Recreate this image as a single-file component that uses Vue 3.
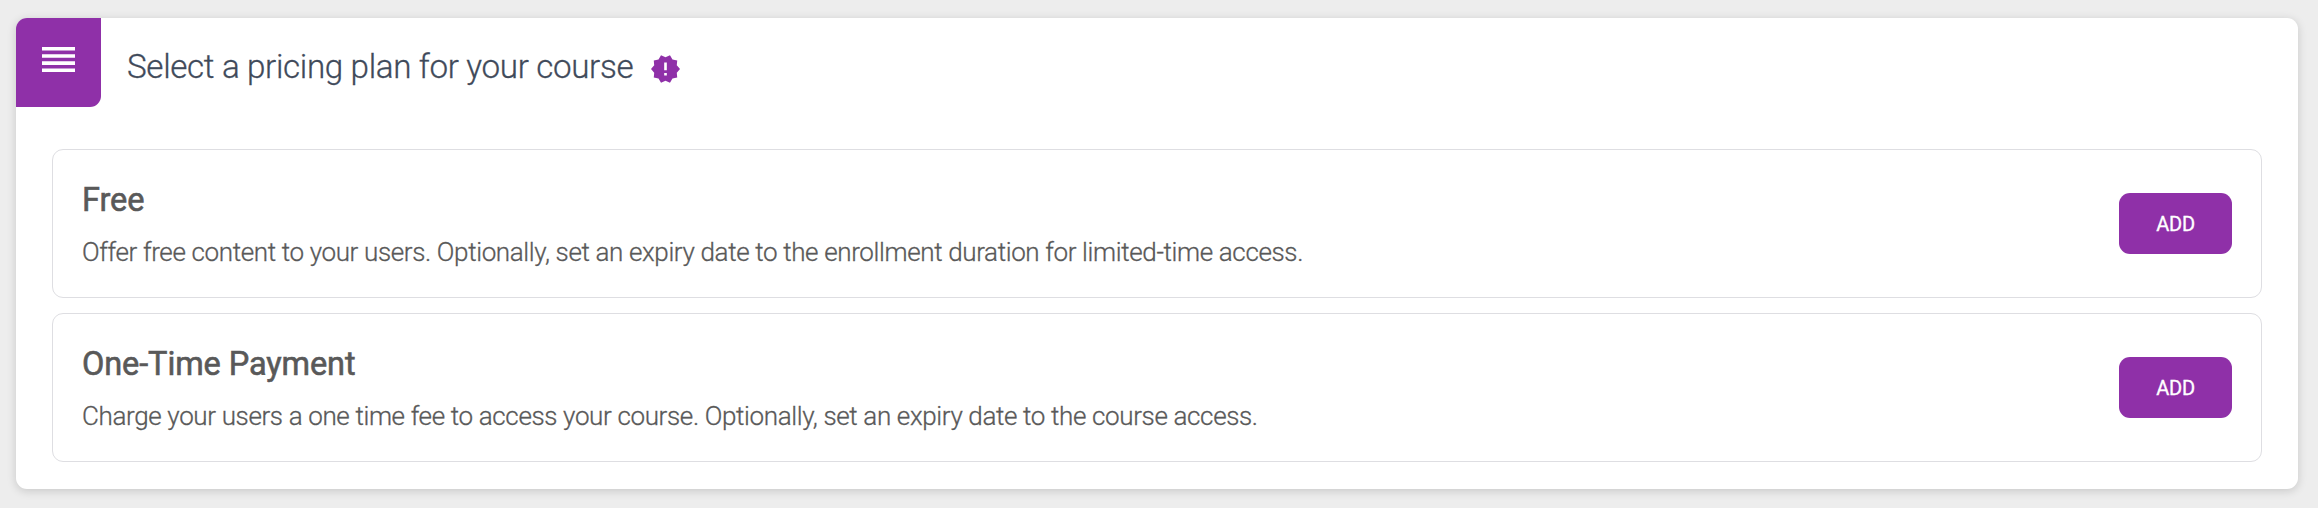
<!--
App.vue — course pricing plan picker
-->
<template>
  <div class="page">
    <section class="card">
      <header class="card-head">
        <div class="card-tab">
          <svg class="tab-icon" viewBox="0 0 33 25">
            <path d="M0 0h33v3.6H0zM0 7.15h33v3.6H0zM0 14.3h33v3.6H0zM0 21.45h33v3.6H0z" />
          </svg>
        </div>
        <h2 class="card-title">Select a pricing plan for your course</h2>
        <svg class="info-icon" viewBox="1 1.5 22 21">
          <path d="M23 12l-2.44-2.78.34-3.68-3.61-.82-1.89-3.18L12 3 8.6 1.54 6.71 4.72l-3.61.81.34 3.68L1 12l2.44 2.78-.34 3.69 3.61.82 1.89 3.18L12 21l3.4 1.46 1.89-3.18 3.61-.82-.34-3.68L23 12zm-10 5h-2v-2h2v2zm0-4h-2V7h2v6z" />
        </svg>
      </header>

      <div class="plans">
        <div v-for="plan in plans" :key="plan.name" class="plan">
          <div class="plan-text">
            <h3 class="plan-name">{{ plan.name }}</h3>
            <p class="plan-desc">{{ plan.desc }}</p>
          </div>
          <button class="add-btn" type="button">ADD</button>
        </div>
      </div>
    </section>
  </div>
</template>

<script setup>
const plans = [
  {
    name: 'Free',
    desc: 'Offer free content to your users. Optionally, set an expiry date to the enrollment duration for limited-time access.'
  },
  {
    name: 'One-Time Payment',
    desc: 'Charge your users a one time fee to access your course. Optionally, set an expiry date to the course access.'
  }
]
</script>

<style>
body { margin: 0; background: #ededed; }
</style>

<style scoped>
.page {
  box-sizing: border-box; height: 508px;
  padding: 18px 20px 19px 16px;
  background: #ededed;
  font-family: Roboto, 'Liberation Sans', sans-serif;
}
.card {
  height: 471px; border-radius: 11px;
  background: #fff;
  box-shadow: 0 2px 10px rgba(0,0,0,0.16);
}
.card-head {
  display: flex; align-items: flex-start; height: 131px;
}
.card-tab {
  box-sizing: border-box; width: 85px; height: 89px;
  padding: 29px 26px 0;
  border-radius: 11px 0 11px 0;
  background: #8f30a8;
}
.tab-icon { display: block; width: 33px; height: 25px; fill: #fff; }
.card-title {
  margin: 29px 0 0 26px;
  font-size: 33.2px; line-height: 40px; font-weight: 300;
  letter-spacing: -0.35px;
  -webkit-text-stroke: 0.3px currentColor;
  color: #3f4a5a;
}
.info-icon {
  width: 29px; height: 28px; margin: 37px 0 0 18px;
  fill: #8f30a8;
}

/* plan rows */
.plans {
  display: flex; flex-direction: column; gap: 15px;
  padding: 0 36px;
}
.plan {
  display: flex; align-items: center; justify-content: space-between;
  box-sizing: border-box; height: 149px;
  padding: 0 29px;
  border: 1px solid #dedee2; border-radius: 11px;
}
.plan-text { padding-top: 2px; }
.plan-name {
  margin: 0 0 14px;
  font-size: 32.5px; line-height: 40px; font-weight: 400;
  letter-spacing: -0.1px;
  -webkit-text-stroke: 0.6px currentColor;
  color: #595959;
}
.plan-desc {
  margin: 0;
  font-size: 26px; line-height: 36px; font-weight: 300;
  letter-spacing: -0.36px;
  -webkit-text-stroke: 0.3px currentColor;
  color: #595959;
}
.add-btn {
  width: 113px; height: 61px; padding: 0;
  border: 0; border-radius: 11px;
  background: #8f30a8; color: #fff;
  font-family: inherit; font-size: 20px; font-weight: 400;
  letter-spacing: -0.2px;
  -webkit-text-stroke: 0.3px currentColor;
}
</style>
